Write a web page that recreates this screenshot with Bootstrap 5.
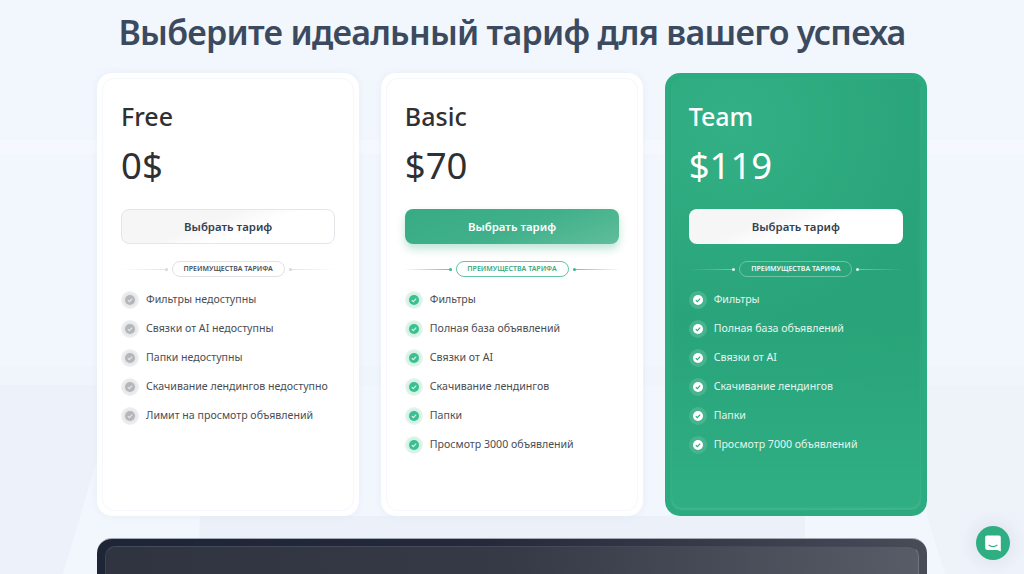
<!DOCTYPE html>
<html lang="ru">
<head>
  <meta charset="UTF-8">
  <meta name="viewport" content="width=device-width, initial-scale=1.0">
  <title>Тарифы</title>
  <link rel="stylesheet" href="https://cdn.jsdelivr.net/npm/bootstrap@5.3.0/dist/css/bootstrap.min.css">
  <style>
    html, body { height: 574px; overflow: hidden; }
    body { background: #f2f6fd; font-family: "Noto Sans", "Open Sans", sans-serif; color: #2f3033; position: relative; }
    .bg-shapes { position: absolute; left: 0; top: 0; width: 1024px; height: 574px; z-index: 0; }
    .page-wrap { position: relative; z-index: 1; width: 830px; margin-left: 97px; }
    .page-title { font-size: 34px; font-weight: 600; color: #3b4a5e; letter-spacing: -0.74px; line-height: 46px; margin: 9px -30px 18px; text-align: center; white-space: nowrap; }
    .plans { gap: 21.5px; }
    .plan { flex: 1 1 0; min-width: 0; height: 443px; border-radius: 15px; background: #fff; padding: 5px; box-shadow: 0 0 6px rgba(210, 222, 240, .3); }
    .plan-in { height: 100%; border: 1px solid #f5f7fc; border-radius: 12px; padding: 21px 18px 0; }
    .plan-team { background: #2dab80; box-shadow: none; }
    .plan-team .plan-in { border-color: transparent; color: #fff; background: linear-gradient(180deg, rgba(47, 174, 131, 0) 55%, #2fae83 96%), radial-gradient(circle at 25% 10%, #33b085 0, #29a47a 48%, #28a279 75%); box-shadow: inset 0 -2px 3px rgba(255,255,255,.1); }
    .plan-name { font-size: 25px; font-weight: 500; line-height: 33px; margin: 0; }
    .plan-price { font-size: 36.5px; line-height: 48px; margin: 8px 0 20px; font-weight: 400; }
    .plan-btn { display: block; width: 100%; height: 35px; padding: 0; border-radius: 8px; font-size: 11.4px; font-weight: 600; color: #353f52; background: linear-gradient(160deg, #f6f6f6 0 40%, #fff 60%); border: 1px solid #e2e5ea; }
    .plan-btn-green { color: #fff; border: 0; background: linear-gradient(160deg, #38ab84 0, #3fb08a 50%, #61bd9b 100%); box-shadow: 0 5px 9px rgba(62, 176, 137, .33); }
    .plan-btn-white { border: 0; background: linear-gradient(160deg, #f6f6f6 0 35%, #fff 55%); }
    .perk-sep { margin: 17px -1px 8px; gap: 4px; height: 16px; }
    .sep-line { flex: 1 1 0; height: 1px; background: linear-gradient(90deg, transparent, #dfe3e8); position: relative; }
    .sep-line.flip { background: linear-gradient(270deg, transparent, #dfe3e8); }
    .sep-line::after { content: ""; position: absolute; right: 0; top: -1px; width: 3px; height: 3px; border-radius: 50%; background: #d4d8dd; }
    .sep-line.flip::after { right: auto; left: 0; }
    .sep-pill { height: 16px; width: 113px; border: 1px solid #dfe3e8; border-radius: 9px; font-size: 7px; font-weight: 600; color: #4b5058; text-align: center; line-height: 14px; text-transform: uppercase; white-space: nowrap; }
    .sep-green .sep-line { background: linear-gradient(90deg, transparent, #62c5a2); }
    .sep-green .sep-line.flip { background: linear-gradient(270deg, transparent, #62c5a2); }
    .sep-green .sep-line::after { background: #3fb58c; }
    .sep-green .sep-pill { border-color: #62c5a2; color: #3aa981; }
    .sep-white .sep-line { background: linear-gradient(90deg, transparent, #73c6a8); }
    .sep-white .sep-line.flip { background: linear-gradient(270deg, transparent, #73c6a8); }
    .sep-white .sep-line::after { background: #e3f4ed; }
    .sep-white .sep-pill { border-color: #6cc4a5; color: #f2faf7; }
    .perks { margin: 0; padding: 0; list-style: none; }
    .perks li { height: 29px; gap: 7px; font-size: 10.6px; color: #4a4d52; white-space: nowrap; }
    .perk-mark { width: 18px; height: 18px; flex: none; display: flex; align-items: center; justify-content: center; border-radius: 50%; background: radial-gradient(circle, #e6e7e9 45%, #f1f2f3 75%, #f6f6f7 100%); }
    .perk-mark svg { width: 10px; height: 10px; display: block; }
    .perks-on .perk-mark { background: radial-gradient(circle, #d3f0e5 45%, #eaf7f2 75%, #f3faf7 100%); }
    .perks-team li { color: #e4f5ef; }
    .perks-team .perk-mark { background: #47b48f; }
    .promo { height: 60px; margin-top: 22px; border-radius: 15px 15px 0 0; border-top: 1px solid #a3a8b3; padding: 7px 8px 0; background: linear-gradient(90deg, #1e2537 0, #23293a 45%, #474c57 100%); }
    .promo-in { height: 100%; border: 1px solid; border-bottom: 0; border-color: #444a58 #70757e #444a58 #3c4252; border-radius: 10px 10px 0 0; background: linear-gradient(90deg, #2f3440 0, #353a46 50%, #575c67 100%); }
    .chat-btn { position: absolute; left: 976px; top: 526px; z-index: 2; width: 34px; height: 34px; border-radius: 50%; padding: 0; border: 0; background: #2fae82; display: flex; align-items: center; justify-content: center; box-shadow: 0 0 14px 4px rgba(205, 210, 222, .4); }
  </style>
</head>
<body>
  <svg class="bg-shapes" viewBox="0 0 1024 574" aria-hidden="true">
    <rect x="0" y="140" width="1024" height="14" fill="#f5f8fe"/>
    <rect x="0" y="366" width="1024" height="20" fill="#f0f4fb"/>
    <polygon points="0,385 97,385 97,460 63,574 0,574" fill="#edf2fa"/>
    <polygon points="200,516 805,516 805,574 198,574" fill="#ebf0f9"/>
    <polygon points="925,385 1024,385 1024,574 945,574 927,516" fill="#eef2f9"/>
  </svg>

  <div class="page-wrap">
    <h1 class="page-title">Выберите идеальный тариф для вашего успеха</h1>

    <div class="plans d-flex">
      <div class="plan">
        <div class="plan-in">
          <h2 class="plan-name">Free</h2>
          <p class="plan-price">0$</p>
          <button class="btn plan-btn" type="button">Выбрать тариф</button>
          <div class="perk-sep d-flex align-items-center">
            <span class="sep-line"></span><span class="sep-pill">Преимущества тарифа</span><span class="sep-line flip"></span>
          </div>
          <ul class="perks">
            <li class="d-flex align-items-center"><span class="perk-mark"><svg viewBox="0 0 12 12"><circle cx="6" cy="6" r="6" fill="#b4b6b9"/><path d="M3.4 6.1l1.8 1.8 3.4-3.5" fill="none" stroke="#e6e7e8" stroke-width="1.4"/></svg></span>Фильтры недоступны</li>
            <li class="d-flex align-items-center"><span class="perk-mark"><svg viewBox="0 0 12 12"><circle cx="6" cy="6" r="6" fill="#b4b6b9"/><path d="M3.4 6.1l1.8 1.8 3.4-3.5" fill="none" stroke="#e6e7e8" stroke-width="1.4"/></svg></span>Связки от AI недоступны</li>
            <li class="d-flex align-items-center"><span class="perk-mark"><svg viewBox="0 0 12 12"><circle cx="6" cy="6" r="6" fill="#b4b6b9"/><path d="M3.4 6.1l1.8 1.8 3.4-3.5" fill="none" stroke="#e6e7e8" stroke-width="1.4"/></svg></span>Папки недоступны</li>
            <li class="d-flex align-items-center"><span class="perk-mark"><svg viewBox="0 0 12 12"><circle cx="6" cy="6" r="6" fill="#b4b6b9"/><path d="M3.4 6.1l1.8 1.8 3.4-3.5" fill="none" stroke="#e6e7e8" stroke-width="1.4"/></svg></span>Скачивание лендингов недоступно</li>
            <li class="d-flex align-items-center"><span class="perk-mark"><svg viewBox="0 0 12 12"><circle cx="6" cy="6" r="6" fill="#b4b6b9"/><path d="M3.4 6.1l1.8 1.8 3.4-3.5" fill="none" stroke="#e6e7e8" stroke-width="1.4"/></svg></span>Лимит на просмотр объявлений</li>
          </ul>
        </div>
      </div>

      <div class="plan">
        <div class="plan-in">
          <h2 class="plan-name">Basic</h2>
          <p class="plan-price">$70</p>
          <button class="btn plan-btn plan-btn-green" type="button">Выбрать тариф</button>
          <div class="perk-sep sep-green d-flex align-items-center">
            <span class="sep-line"></span><span class="sep-pill">Преимущества тарифа</span><span class="sep-line flip"></span>
          </div>
          <ul class="perks perks-on">
            <li class="d-flex align-items-center"><span class="perk-mark"><svg viewBox="0 0 12 12"><circle cx="6" cy="6" r="6" fill="#38c08f"/><path d="M3.4 6.1l1.8 1.8 3.4-3.5" fill="none" stroke="#d9f5ea" stroke-width="1.4"/></svg></span>Фильтры</li>
            <li class="d-flex align-items-center"><span class="perk-mark"><svg viewBox="0 0 12 12"><circle cx="6" cy="6" r="6" fill="#38c08f"/><path d="M3.4 6.1l1.8 1.8 3.4-3.5" fill="none" stroke="#d9f5ea" stroke-width="1.4"/></svg></span>Полная база объявлений</li>
            <li class="d-flex align-items-center"><span class="perk-mark"><svg viewBox="0 0 12 12"><circle cx="6" cy="6" r="6" fill="#38c08f"/><path d="M3.4 6.1l1.8 1.8 3.4-3.5" fill="none" stroke="#d9f5ea" stroke-width="1.4"/></svg></span>Связки от AI</li>
            <li class="d-flex align-items-center"><span class="perk-mark"><svg viewBox="0 0 12 12"><circle cx="6" cy="6" r="6" fill="#38c08f"/><path d="M3.4 6.1l1.8 1.8 3.4-3.5" fill="none" stroke="#d9f5ea" stroke-width="1.4"/></svg></span>Скачивание лендингов</li>
            <li class="d-flex align-items-center"><span class="perk-mark"><svg viewBox="0 0 12 12"><circle cx="6" cy="6" r="6" fill="#38c08f"/><path d="M3.4 6.1l1.8 1.8 3.4-3.5" fill="none" stroke="#d9f5ea" stroke-width="1.4"/></svg></span>Папки</li>
            <li class="d-flex align-items-center"><span class="perk-mark"><svg viewBox="0 0 12 12"><circle cx="6" cy="6" r="6" fill="#38c08f"/><path d="M3.4 6.1l1.8 1.8 3.4-3.5" fill="none" stroke="#d9f5ea" stroke-width="1.4"/></svg></span>Просмотр 3000 объявлений</li>
          </ul>
        </div>
      </div>

      <div class="plan plan-team">
        <div class="plan-in">
          <h2 class="plan-name">Team</h2>
          <p class="plan-price">$119</p>
          <button class="btn plan-btn plan-btn-white" type="button">Выбрать тариф</button>
          <div class="perk-sep sep-white d-flex align-items-center">
            <span class="sep-line"></span><span class="sep-pill">Преимущества тарифа</span><span class="sep-line flip"></span>
          </div>
          <ul class="perks perks-team">
            <li class="d-flex align-items-center"><span class="perk-mark"><svg viewBox="0 0 12 12"><circle cx="6" cy="6" r="6" fill="#fff"/><path d="M3.4 6.1l1.8 1.8 3.4-3.5" fill="none" stroke="#2aa87c" stroke-width="1.4"/></svg></span>Фильтры</li>
            <li class="d-flex align-items-center"><span class="perk-mark"><svg viewBox="0 0 12 12"><circle cx="6" cy="6" r="6" fill="#fff"/><path d="M3.4 6.1l1.8 1.8 3.4-3.5" fill="none" stroke="#2aa87c" stroke-width="1.4"/></svg></span>Полная база объявлений</li>
            <li class="d-flex align-items-center"><span class="perk-mark"><svg viewBox="0 0 12 12"><circle cx="6" cy="6" r="6" fill="#fff"/><path d="M3.4 6.1l1.8 1.8 3.4-3.5" fill="none" stroke="#2aa87c" stroke-width="1.4"/></svg></span>Связки от AI</li>
            <li class="d-flex align-items-center"><span class="perk-mark"><svg viewBox="0 0 12 12"><circle cx="6" cy="6" r="6" fill="#fff"/><path d="M3.4 6.1l1.8 1.8 3.4-3.5" fill="none" stroke="#2aa87c" stroke-width="1.4"/></svg></span>Скачивание лендингов</li>
            <li class="d-flex align-items-center"><span class="perk-mark"><svg viewBox="0 0 12 12"><circle cx="6" cy="6" r="6" fill="#fff"/><path d="M3.4 6.1l1.8 1.8 3.4-3.5" fill="none" stroke="#2aa87c" stroke-width="1.4"/></svg></span>Папки</li>
            <li class="d-flex align-items-center"><span class="perk-mark"><svg viewBox="0 0 12 12"><circle cx="6" cy="6" r="6" fill="#fff"/><path d="M3.4 6.1l1.8 1.8 3.4-3.5" fill="none" stroke="#2aa87c" stroke-width="1.4"/></svg></span>Просмотр 7000 объявлений</li>
          </ul>
        </div>
      </div>
    </div>

    <div class="promo"><div class="promo-in"></div></div>
  </div>

  <button class="chat-btn" type="button" aria-label="Чат">
    <svg width="18" height="19" viewBox="0 0 18 19"><path d="M3 1.5h12a1.8 1.8 0 0 1 1.8 1.8v14.2l-3.4-1.6H3a1.8 1.8 0 0 1-1.8-1.8V3.3A1.8 1.8 0 0 1 3 1.5z" fill="#fff"/><path d="M5 11.3c2.2 1.5 5.8 1.5 8 0" fill="none" stroke="#2fae82" stroke-width="1.2" stroke-linecap="round"/></svg>
  </button>
  <script src="https://cdn.jsdelivr.net/npm/bootstrap@5.3.0/dist/js/bootstrap.bundle.min.js"></script>
</body>
</html>
